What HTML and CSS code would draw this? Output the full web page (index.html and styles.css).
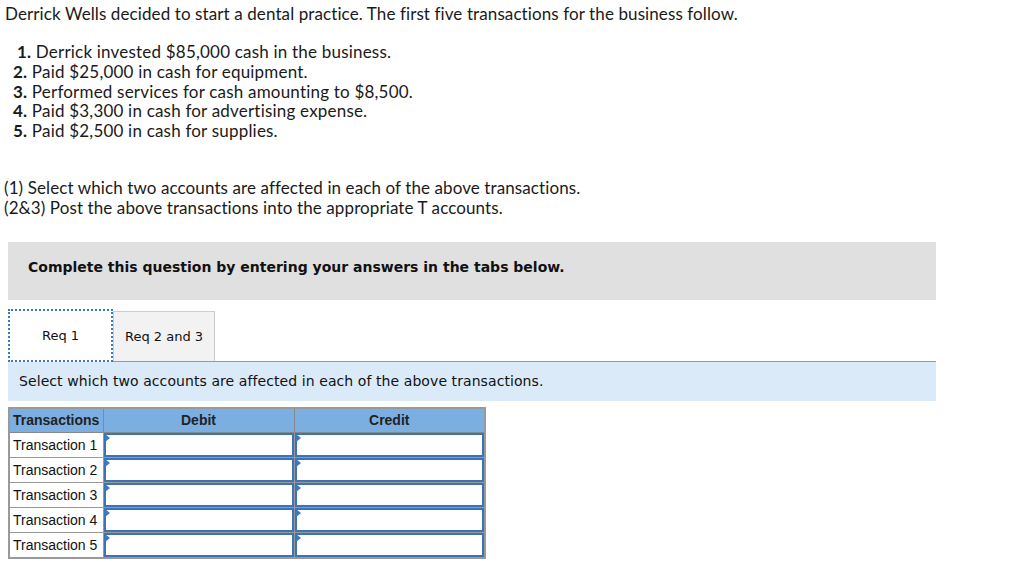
FILE: index.html
```html
<!DOCTYPE html>
<html>
<head>
<meta charset="utf-8">
<link rel="stylesheet" href="styles.css">
</head>
<body>
<div class="page">
  <p class="intro">Derrick Wells decided to start a dental practice. The first five transactions for the business follow.</p>
  <ol class="steps">
    <li><b>1.</b> Derrick invested $85,000 cash in the business.</li>
    <li><b>2.</b> Paid $25,000 in cash for equipment.</li>
    <li><b>3.</b> Performed services for cash amounting to $8,500.</li>
    <li><b>4.</b> Paid $3,300 in cash for advertising expense.</li>
    <li><b>5.</b> Paid $2,500 in cash for supplies.</li>
  </ol>
  <p class="req">(1) Select which two accounts are affected in each of the above transactions.<br>(2&amp;3) Post the above transactions into the appropriate T accounts.</p>

  <div class="banner">Complete this question by entering your answers in the tabs below.</div>

  <div class="tabs">
    <div class="tab active">Req 1</div>
    <div class="tab">Req 2 and 3</div>
  </div>
  <div class="panel">Select which two accounts are affected in each of the above transactions.</div>

  <table class="grid">
    <colgroup><col class="w1"><col class="w2"><col class="w3"></colgroup>
    <thead>
      <tr><th class="c1">Transactions</th><th>Debit</th><th>Credit</th></tr>
    </thead>
    <tbody>
      <tr><td class="lbl">Transaction 1</td><td class="inp"><div class="box"></div></td><td class="inp"><div class="box"></div></td></tr>
      <tr><td class="lbl">Transaction 2</td><td class="inp"><div class="box"></div></td><td class="inp"><div class="box"></div></td></tr>
      <tr><td class="lbl">Transaction 3</td><td class="inp"><div class="box"></div></td><td class="inp"><div class="box"></div></td></tr>
      <tr><td class="lbl">Transaction 4</td><td class="inp"><div class="box"></div></td><td class="inp"><div class="box"></div></td></tr>
      <tr><td class="lbl">Transaction 5</td><td class="inp"><div class="box"></div></td><td class="inp"><div class="box"></div></td></tr>
    </tbody>
  </table>
</div>
</body>
</html>
```
FILE: styles.css
```css
html, body { margin: 0; padding: 0; background: #fff; }
.page { color: #1a1a1a; }
.intro, .steps, .req {
  font-family: "Lato", "Open Sans", sans-serif; font-size: 17px; letter-spacing: 0.1px;
}
.intro { margin: 0; padding: 4px 0 0 5px; line-height: 19px; }
.steps { list-style: none; margin: 0; padding: 19px 0 0 13px; line-height: 19.75px; letter-spacing: 0.2px; }
.steps li b { font-weight: 700; }
.steps li:first-child b { margin-left: 4px; }
.req { margin: 0; padding: 37px 0 0 4px; line-height: 20px; }
.banner {
  margin: 24px 0 0 8px; width: 908px; height: 58px; padding-left: 20px;
  background: #e0e0e0;
  font-family: "DejaVu Sans", Verdana, sans-serif; font-weight: 700; font-size: 14px;
  line-height: 50px; color: #111;
}
.tabs { display: flex; margin: 8px 0 0 8px; height: 53px; align-items: flex-end; }
.tab {
  font-family: "DejaVu Sans", Verdana, sans-serif; font-size: 13px; color: #111;
  display: flex; align-items: center; justify-content: center;
  box-sizing: border-box;
}
.tab.active {
  width: 105px; height: 53px; background: #fff;
  border: 2px dotted #3a78c4; position: relative; z-index: 1; margin-bottom: -1px;
}
.tab:not(.active) {
  width: 102px; height: 50px; background: #f2f2f2;
  border: 1px solid #ccc; border-bottom: none;
}
.panel {
  margin-left: 8px; width: 917px; height: 39px; padding-left: 11px;
  background: #dbeaf8; border-top: 1px solid #999;
  font-family: "DejaVu Sans", Verdana, sans-serif; font-size: 14px; line-height: 39px; color: #111;
  letter-spacing: 0.08px;
}
.grid {
  margin: 6px 0 0 8px; border-collapse: collapse; table-layout: fixed; width: 477px;
  font-family: "Liberation Sans", Arial, sans-serif; font-size: 14px; color: #111;
  border: 2px solid #999;
}
.w1 { width: 94px; }
.w2, .w3 { width: 191px; }
.grid th {
  background: #7bafe1; height: 23px; padding: 0; border: 1px solid #888;
  font-weight: 700; text-align: center; color: #222;
}
.grid th.c1 { text-align: left; padding-left: 3px; }
.grid td { border: 1px solid #999; padding: 0; height: 24px; }
.grid td.lbl { padding-left: 3px; white-space: nowrap; }
.grid td.inp { padding: 0; }
.box {
  height: 20px; border: 2px solid #3e72b8; background: #fff; position: relative;
}
.box::before {
  content: ""; position: absolute; left: -1px; top: -1px;
  border-left: 5px solid #3a78c4; border-top: 4px solid transparent; border-bottom: 4px solid transparent;
}
```
